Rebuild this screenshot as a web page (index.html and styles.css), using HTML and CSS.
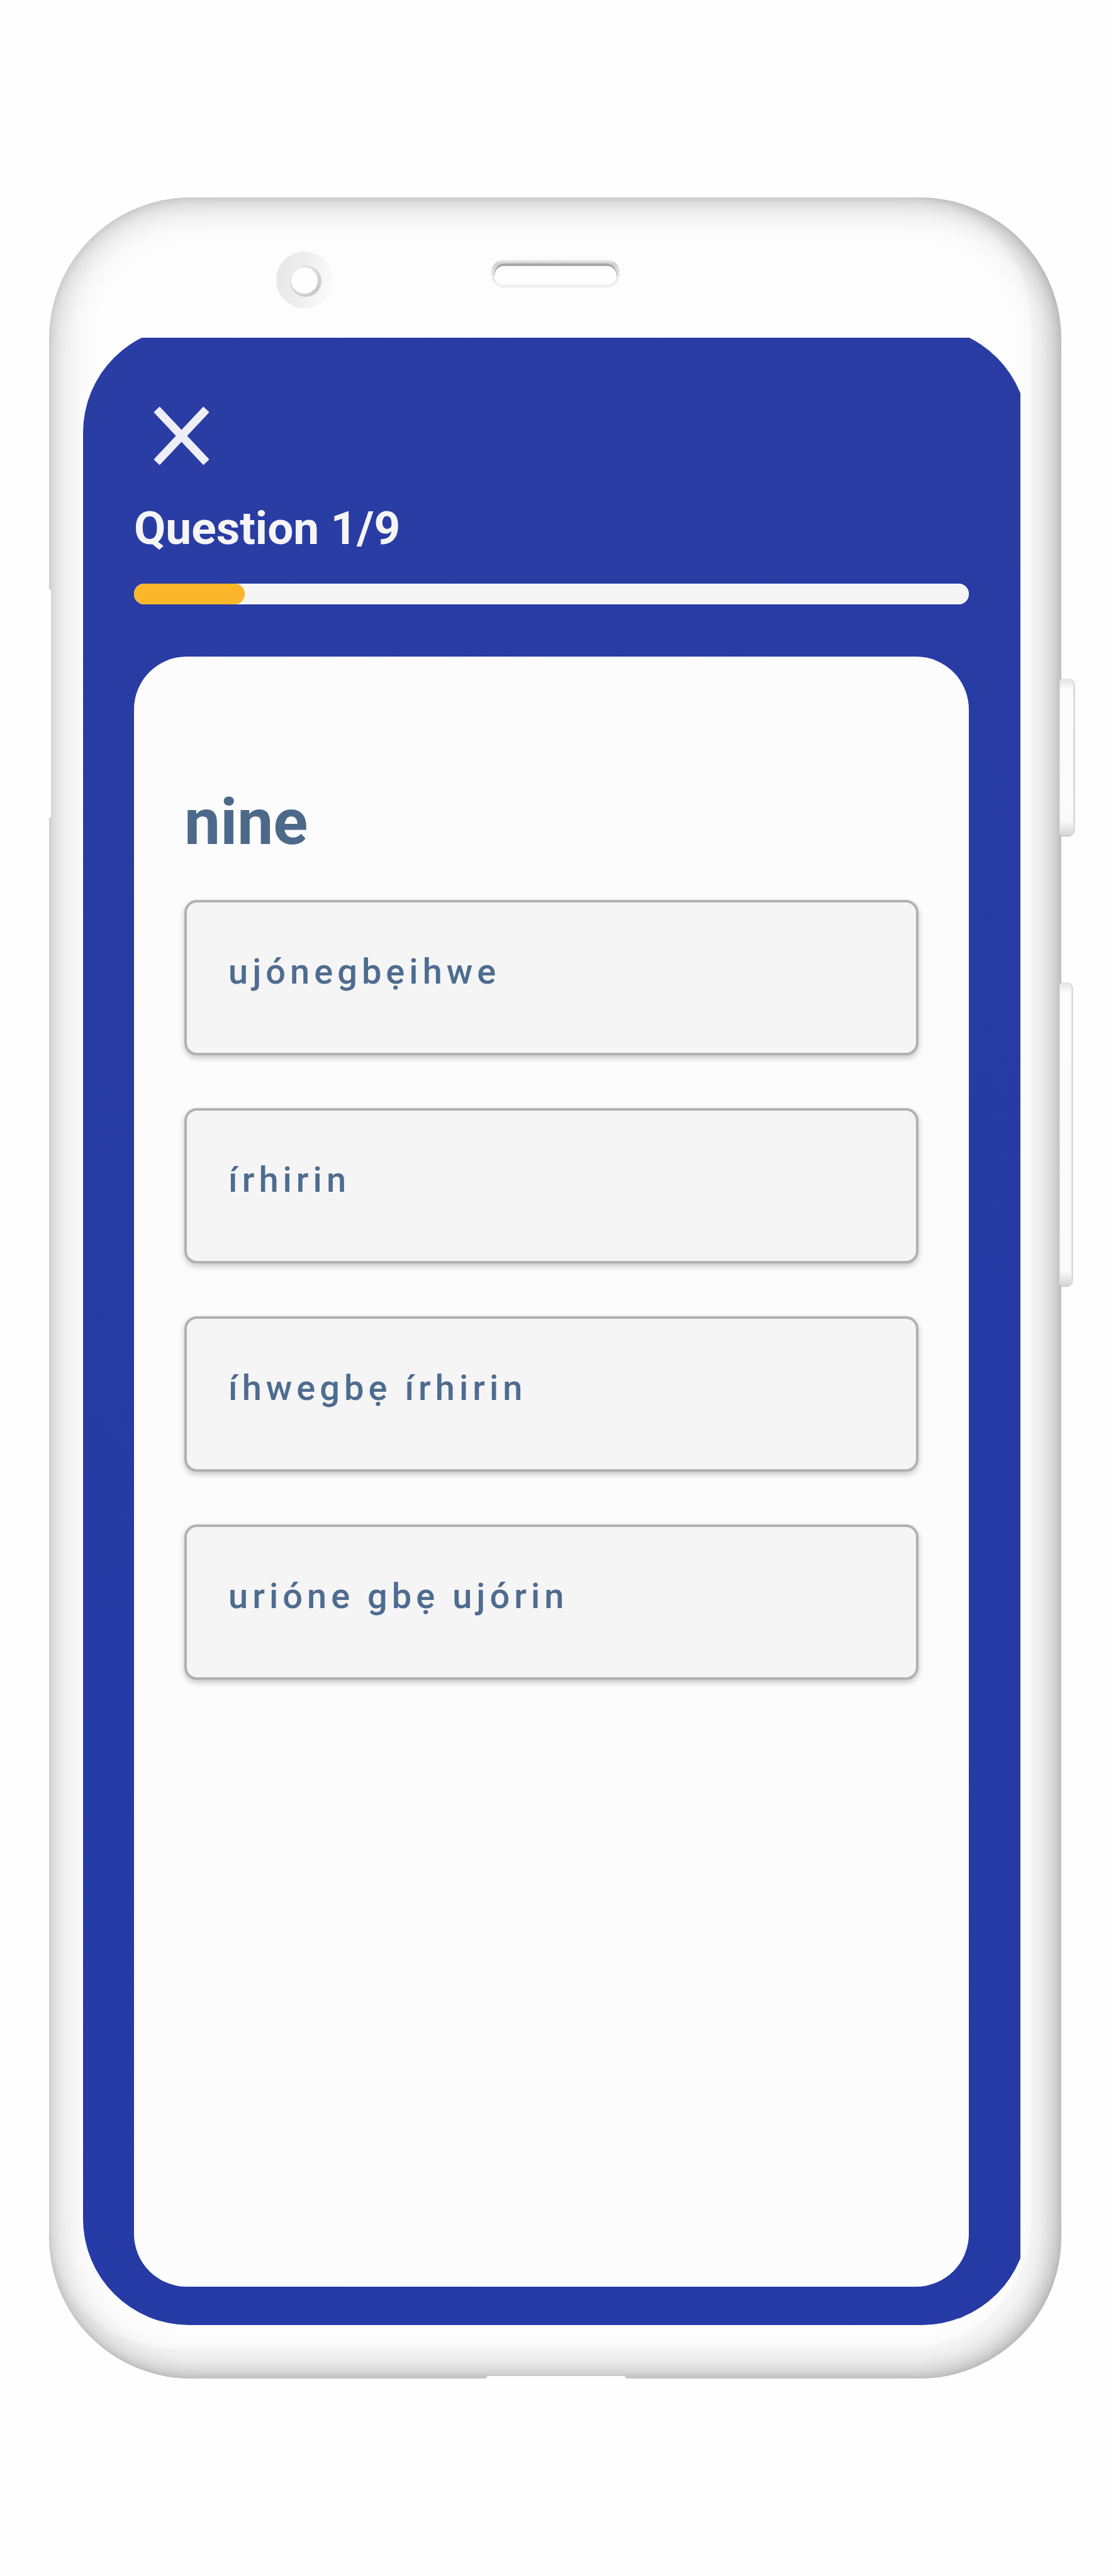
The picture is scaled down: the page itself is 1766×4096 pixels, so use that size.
FILE: index.html
```html
<!DOCTYPE html>
<html lang="en">
<head>
  <meta charset="utf-8">
  <meta name="viewport" content="width=device-width, initial-scale=1">
  <title>Question 1/9</title>
  <link rel="stylesheet" href="styles.css">
</head>
<body>
  <div class="stage">
    <div class="phone">
      <div class="bezel">
        <svg class="sensors" viewBox="0 0 547 92" aria-hidden="true">
          <defs>
            <linearGradient id="lens" x1="0" y1="0.4" x2="1" y2="0.6">
              <stop offset="0" stop-color="#e7e7e7"/>
              <stop offset="0.5" stop-color="#efefef"/>
              <stop offset="1" stop-color="#fbfbfb"/>
            </linearGradient>
            <linearGradient id="ring" x1="0.1" y1="0.1" x2="0.8" y2="0.9">
              <stop offset="0" stop-color="#e9e9e9"/>
              <stop offset="1" stop-color="#c8c8c8"/>
            </linearGradient>
            <linearGradient id="slot" x1="0" y1="0" x2="0" y2="1">
              <stop offset="0" stop-color="#f0f0f0"/>
              <stop offset="0.14" stop-color="#cfcfcf"/>
              <stop offset="0.6" stop-color="#ececec"/>
              <stop offset="1" stop-color="#efefef"/>
            </linearGradient>
          </defs>
          <circle cx="46" cy="46" r="45" fill="url(#lens)"/>
          <circle cx="48" cy="48" r="25" fill="url(#ring)"/>
          <circle cx="46" cy="47" r="21" fill="#fefefe"/>
          <rect x="343" y="14" width="204" height="44" rx="20" fill="url(#slot)"/>
          <path d="M347 40a16 20 0 0 1 16-20h164a16 20 0 0 1 16 20z" fill="#a6a6a6"/>
          <path d="M348 40a15 15 0 0 1 15-16h164a15 15 0 0 1 15 16a15 14 0 0 1-15 14H363a15 14 0 0 1-15-14z" fill="#fefefe"/>
        </svg>
      </div>

      <main class="screen">
        <button class="close" type="button" aria-label="Close">
          <svg class="close-icon" viewBox="0 0 87 94" aria-hidden="true">
            <path d="M4 5L83 89M83 5L4 89" fill="none" stroke="#eeeff6" stroke-width="13"/>
          </svg>
        </button>
        <label class="counter" for="quiz-progress">Question 1/9</label>
        <progress class="progress" id="quiz-progress" max="100" value="13.25"></progress>

        <section class="card">
          <h1 class="prompt">nine</h1>
          <ul class="options">
            <li><button class="option" type="button">ujónegbẹihwe</button></li>
            <li><button class="option" type="button">írhirin</button></li>
            <li><button class="option" type="button">íhwegbẹ írhirin</button></li>
            <li><button class="option" type="button">urióne gbẹ ujórin</button></li>
          </ul>
        </section>
      </main>

      <span class="side-key side-key-power"></span>
      <span class="side-key side-key-volume"></span>
      <span class="recess recess-left"></span>
      <span class="recess recess-bottom"></span>
    </div>
  </div>
</body>
</html>
```

FILE: styles.css
```css
* {
  box-sizing: border-box;
}

body {
  margin: 0;
  background: #fefefe;
  font-family: Roboto, "Noto Sans", sans-serif;
}

.stage {
  display: flex;
  min-height: 100vh;
  padding: 314px 79px 314px 78px;
}

/* Phone shell */
.phone {
  position: relative;
  flex: 1;
  display: flex;
  flex-direction: column;
  padding: 0 53px 85px 54px;
  border-radius: 225px;
  background: #fdfdfd;
  box-shadow:
    inset 0 0 64px rgba(0, 0, 0, 0.28),
    inset 0 0 12px rgba(0, 0, 0, 0.08),
    inset -10px -4px 30px rgba(0, 0, 0, 0.12),
    inset -24px -24px 2px 24px rgba(0, 0, 0, 0.02);
}

.bezel {
  height: 205px;
  padding: 85px 0 0 306px;
}

.sensors {
  display: block;
  width: 547px;
  height: 92px;
}

.side-key {
  position: absolute;
  border: 1px solid #e2e2e2;
  border-right: 3px solid #dcdcdc;
  border-bottom-color: #bcbcbc;
  border-radius: 6px 10px 10px 6px;
  background: linear-gradient(#e4e4e4, #fcfcfc 16px, #fafafa calc(100% - 24px), #d4d4d4);
}

.side-key-power {
  top: 765px;
  right: -22px;
  width: 25px;
  height: 251px;
}

.side-key-volume {
  top: 1248px;
  right: -19px;
  width: 22px;
  height: 484px;
}

.recess {
  position: absolute;
  background: #fefefe;
}

.recess-left {
  top: 624px;
  left: 0;
  width: 3px;
  height: 362px;
}

.recess-bottom {
  bottom: 0;
  left: 50%;
  width: 222px;
  height: 4px;
  margin-left: -110px;
  border-radius: 12px 12px 0 0;
}

/* Display: the panel is cut off straight at its top and right edges */
.screen {
  flex: 1;
  display: flex;
  flex-direction: column;
  padding: 127px 94px 61px 81px;
  border-radius: 169px;
  background: linear-gradient(160deg, #2a3da4, #263ba5 60%, #253aa4);
  clip-path: inset(18px 12px 0 0);
}

.close {
  align-self: flex-start;
  margin: 0 0 58px 32px;
  padding: 0;
  border: 0;
  background: none;
}

.close-icon {
  display: block;
  width: 87px;
  height: 94px;
}

.counter {
  margin-bottom: 46px;
  color: #f5f5f5;
  font-size: 73px;
  font-weight: 700;
  line-height: 84px;
}

.progress {
  appearance: none;
  display: block;
  width: 100%;
  height: 33px;
  margin-bottom: 83px;
  border: 0;
  border-radius: 16px;
  overflow: hidden;
  background: #f5f5f5;
}

.progress::-webkit-progress-bar {
  border-radius: 16px;
  background: #f5f5f5;
}

.progress::-webkit-progress-value {
  border-radius: 16px;
  background: #fcb62b;
}

.card {
  flex: 1;
  padding: 203px 80px 80px;
  border-radius: 84px;
  background: #fcfcfc;
}

.prompt {
  margin: 0 0 64px;
  color: #4d698a;
  font-size: 102px;
  font-weight: 700;
  line-height: 120px;
}

.options {
  display: grid;
  gap: 84px;
  margin: 0;
  padding: 0;
  list-style: none;
}

.option {
  display: block;
  width: 100%;
  height: 247px;
  padding: 0 66px 20px;
  border: 4px solid #b1b1b1;
  border-radius: 20px;
  background: #f5f5f5;
  box-shadow: 0 4px 10px rgba(0, 0, 0, 0.22);
  color: #4e6c90;
  font-family: inherit;
  font-size: 56px;
  font-weight: 500;
  line-height: 66px;
  letter-spacing: 7px;
  text-align: left;
}
```
